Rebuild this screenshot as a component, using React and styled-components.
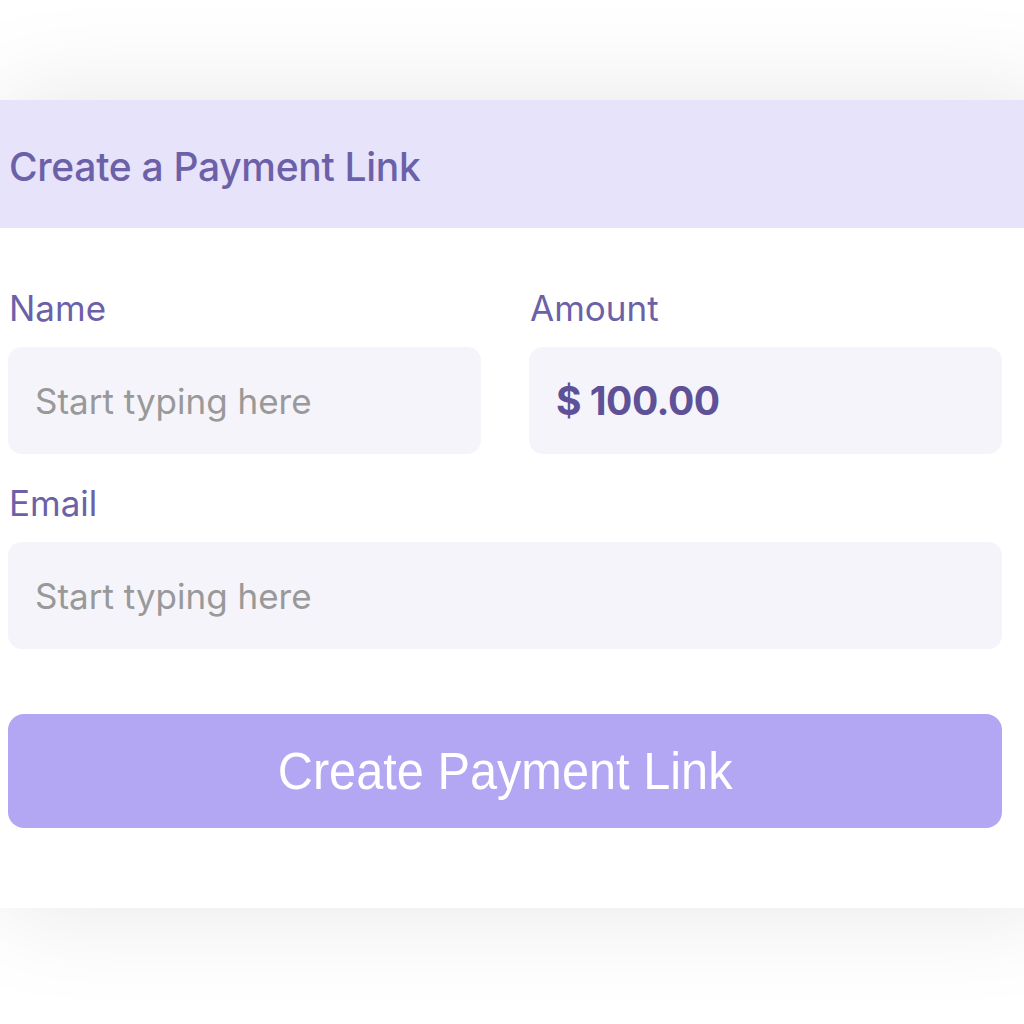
import React from "react"
import styled, { createGlobalStyle } from "styled-components"

const GlobalStyle = createGlobalStyle`
  html, body {
    margin: 0;
    padding: 0;
    background: #ffffff;
    font-family: Inter, "Open Sans", sans-serif;
    overflow: hidden;
  }
`

const Page = styled.div`
  width: 1024px;
  height: 1024px;
  padding-top: 100px;
  box-sizing: border-box;
  background: #ffffff;
`

const Card = styled.div`
  width: 1060px;
  background: #ffffff;
  box-shadow: 0 0 100px rgba(0, 0, 0, 0.1);
`

const Header = styled.div`
  height: 128px;
  background: #e7e3fa;
  display: flex;
  align-items: center;
  padding-left: 9px;
`

const Title = styled.h1`
  margin: 4px 0 0;
  font-size: 39px;
  font-weight: 500;
  color: #6c61a8;
  letter-spacing: -0.3px;
`

const Form = styled.div`
  width: 994px;
  padding: 60px 0 80px 8px;
  display: flex;
  flex-direction: column;
`

const Row = styled.div`
  display: grid;
  grid-template-columns: 473px 473px;
  column-gap: 48px;
`

const Field = styled.div`
  display: flex;
  flex-direction: column;
  margin-top: ${({ $top }) => $top || 0}px;
`

const Label = styled.label`
  font-size: 35px;
  line-height: 40px;
  color: #6c61a8;
  padding-left: 1px;
  margin-bottom: 19px;
`

const Input = styled.div`
  height: 107px;
  border-radius: 14px;
  background: #f5f4fa;
  display: flex;
  align-items: center;
  padding-left: 27px;
  font-size: ${({ $filled }) => ($filled ? 39 : 35)}px;
  color: ${({ $filled }) => ($filled ? "#5e5197" : "#999999")};
  font-weight: ${({ $filled }) => ($filled ? 700 : 400)};
  letter-spacing: ${({ $filled }) => ($filled ? "-0.5px" : "0")};
`

const Button = styled.button`
  margin-top: 65px;
  height: 114px;
  border: none;
  border-radius: 16px;
  background: #b3a6f2;
  color: #ffffff;
  font-family: "Liberation Sans", Arial, sans-serif;
  font-size: 51px;
  font-weight: 400;
  display: flex;
  align-items: center;
  justify-content: center;
  cursor: pointer;
`

const Narrow = styled.span`
  display: inline-block;
  transform: scaleX(0.955);
`

export default function App() {
  return (
    <>
      <GlobalStyle />
      <Page>
        <Card>
          <Header>
            <Title>Create a Payment Link</Title>
          </Header>
          <Form>
            <Row>
              <Field>
                <Label>Name</Label>
                <Input>Start typing here</Input>
              </Field>
              <Field>
                <Label>Amount</Label>
                <Input $filled>$ 100.00</Input>
              </Field>
            </Row>
            <Field $top={29}>
              <Label>Email</Label>
              <Input>Start typing here</Input>
            </Field>
            <Button>
              <Narrow>Create Payment Link</Narrow>
            </Button>
          </Form>
        </Card>
      </Page>
    </>
  )
}
